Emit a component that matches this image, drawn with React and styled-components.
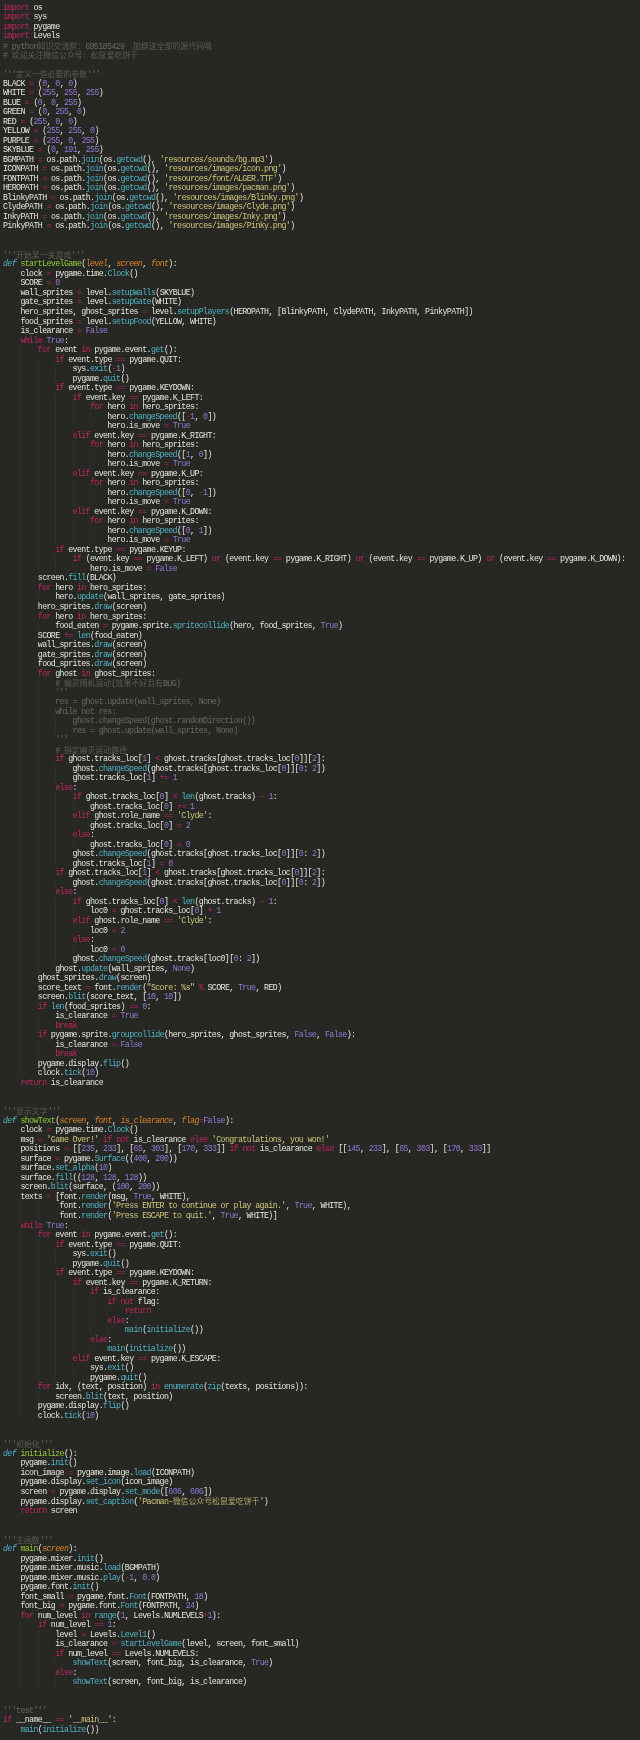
import React from "react";
import styled, { createGlobalStyle } from "styled-components";

const SOURCE = `import os
import sys
import pygame
import Levels
# python知识交流群：695185429  加群送全部的源代码哦
# 欢迎关注微信公众号：松鼠爱吃饼干

'''定义一些必要的参数'''
BLACK = (0, 0, 0)
WHITE = (255, 255, 255)
BLUE = (0, 0, 255)
GREEN = (0, 255, 0)
RED = (255, 0, 0)
YELLOW = (255, 255, 0)
PURPLE = (255, 0, 255)
SKYBLUE = (0, 191, 255)
BGMPATH = os.path.join(os.getcwd(), 'resources/sounds/bg.mp3')
ICONPATH = os.path.join(os.getcwd(), 'resources/images/icon.png')
FONTPATH = os.path.join(os.getcwd(), 'resources/font/ALGER.TTF')
HEROPATH = os.path.join(os.getcwd(), 'resources/images/pacman.png')
BlinkyPATH = os.path.join(os.getcwd(), 'resources/images/Blinky.png')
ClydePATH = os.path.join(os.getcwd(), 'resources/images/Clyde.png')
InkyPATH = os.path.join(os.getcwd(), 'resources/images/Inky.png')
PinkyPATH = os.path.join(os.getcwd(), 'resources/images/Pinky.png')


'''开始某一关游戏'''
def startLevelGame(level, screen, font):
    clock = pygame.time.Clock()
    SCORE = 0
    wall_sprites = level.setupWalls(SKYBLUE)
    gate_sprites = level.setupGate(WHITE)
    hero_sprites, ghost_sprites = level.setupPlayers(HEROPATH, [BlinkyPATH, ClydePATH, InkyPATH, PinkyPATH])
    food_sprites = level.setupFood(YELLOW, WHITE)
    is_clearance = False
    while True:
        for event in pygame.event.get():
            if event.type == pygame.QUIT:
                sys.exit(-1)
                pygame.quit()
            if event.type == pygame.KEYDOWN:
                if event.key == pygame.K_LEFT:
                    for hero in hero_sprites:
                        hero.changeSpeed([-1, 0])
                        hero.is_move = True
                elif event.key == pygame.K_RIGHT:
                    for hero in hero_sprites:
                        hero.changeSpeed([1, 0])
                        hero.is_move = True
                elif event.key == pygame.K_UP:
                    for hero in hero_sprites:
                        hero.changeSpeed([0, -1])
                        hero.is_move = True
                elif event.key == pygame.K_DOWN:
                    for hero in hero_sprites:
                        hero.changeSpeed([0, 1])
                        hero.is_move = True
            if event.type == pygame.KEYUP:
                if (event.key == pygame.K_LEFT) or (event.key == pygame.K_RIGHT) or (event.key == pygame.K_UP) or (event.key == pygame.K_DOWN):
                    hero.is_move = False
        screen.fill(BLACK)
        for hero in hero_sprites:
            hero.update(wall_sprites, gate_sprites)
        hero_sprites.draw(screen)
        for hero in hero_sprites:
            food_eaten = pygame.sprite.spritecollide(hero, food_sprites, True)
        SCORE += len(food_eaten)
        wall_sprites.draw(screen)
        gate_sprites.draw(screen)
        food_sprites.draw(screen)
        for ghost in ghost_sprites:
            # 幽灵随机运动(效果不好且有BUG)
            '''
            res = ghost.update(wall_sprites, None)
            while not res:
                ghost.changeSpeed(ghost.randomDirection())
                res = ghost.update(wall_sprites, None)
            '''
            # 指定幽灵运动路径
            if ghost.tracks_loc[1] < ghost.tracks[ghost.tracks_loc[0]][2]:
                ghost.changeSpeed(ghost.tracks[ghost.tracks_loc[0]][0: 2])
                ghost.tracks_loc[1] += 1
            else:
                if ghost.tracks_loc[0] < len(ghost.tracks) - 1:
                    ghost.tracks_loc[0] += 1
                elif ghost.role_name == 'Clyde':
                    ghost.tracks_loc[0] = 2
                else:
                    ghost.tracks_loc[0] = 0
                ghost.changeSpeed(ghost.tracks[ghost.tracks_loc[0]][0: 2])
                ghost.tracks_loc[1] = 0
            if ghost.tracks_loc[1] < ghost.tracks[ghost.tracks_loc[0]][2]:
                ghost.changeSpeed(ghost.tracks[ghost.tracks_loc[0]][0: 2])
            else:
                if ghost.tracks_loc[0] < len(ghost.tracks) - 1:
                    loc0 = ghost.tracks_loc[0] + 1
                elif ghost.role_name == 'Clyde':
                    loc0 = 2
                else:
                    loc0 = 0
                ghost.changeSpeed(ghost.tracks[loc0][0: 2])
            ghost.update(wall_sprites, None)
        ghost_sprites.draw(screen)
        score_text = font.render("Score: %s" % SCORE, True, RED)
        screen.blit(score_text, [10, 10])
        if len(food_sprites) == 0:
            is_clearance = True
            break
        if pygame.sprite.groupcollide(hero_sprites, ghost_sprites, False, False):
            is_clearance = False
            break
        pygame.display.flip()
        clock.tick(10)
    return is_clearance


'''显示文字'''
def showText(screen, font, is_clearance, flag=False):
    clock = pygame.time.Clock()
    msg = 'Game Over!' if not is_clearance else 'Congratulations, you won!'
    positions = [[235, 233], [65, 303], [170, 333]] if not is_clearance else [[145, 233], [65, 303], [170, 333]]
    surface = pygame.Surface((400, 200))
    surface.set_alpha(10)
    surface.fill((128, 128, 128))
    screen.blit(surface, (100, 200))
    texts = [font.render(msg, True, WHITE),
             font.render('Press ENTER to continue or play again.', True, WHITE),
             font.render('Press ESCAPE to quit.', True, WHITE)]
    while True:
        for event in pygame.event.get():
            if event.type == pygame.QUIT:
                sys.exit()
                pygame.quit()
            if event.type == pygame.KEYDOWN:
                if event.key == pygame.K_RETURN:
                    if is_clearance:
                        if not flag:
                            return
                        else:
                            main(initialize())
                    else:
                        main(initialize())
                elif event.key == pygame.K_ESCAPE:
                    sys.exit()
                    pygame.quit()
        for idx, (text, position) in enumerate(zip(texts, positions)):
            screen.blit(text, position)
        pygame.display.flip()
        clock.tick(10)


'''初始化'''
def initialize():
    pygame.init()
    icon_image = pygame.image.load(ICONPATH)
    pygame.display.set_icon(icon_image)
    screen = pygame.display.set_mode([606, 606])
    pygame.display.set_caption('Pacman-微信公众号松鼠爱吃饼干')
    return screen


'''主函数'''
def main(screen):
    pygame.mixer.init()
    pygame.mixer.music.load(BGMPATH)
    pygame.mixer.music.play(-1, 0.0)
    pygame.font.init()
    font_small = pygame.font.Font(FONTPATH, 18)
    font_big = pygame.font.Font(FONTPATH, 24)
    for num_level in range(1, Levels.NUMLEVELS+1):
        if num_level == 1:
            level = Levels.Level1()
            is_clearance = startLevelGame(level, screen, font_small)
            if num_level == Levels.NUMLEVELS:
                showText(screen, font_big, is_clearance, True)
            else:
                showText(screen, font_big, is_clearance)


'''test'''
if __name__ == '__main__':
    main(initialize())`;

const KEYWORDS = new Set(["import", "if", "elif", "else", "for", "in", "while", "return", "break", "not", "or"]);
const CONSTANTS = new Set(["True", "False", "None"]);
const TOKEN = /(#.*$)|('[^']*'|"[^"]*")|(\d+(?:\.\d+)?)|([A-Za-z_]\w*)|(\s+)|([-+=<%]+)|(.)/g;

function tokenize(text) {
  const isDef = text.startsWith("def ");
  const out = [];
  let parenOpen = false;
  let match;
  TOKEN.lastIndex = 0;
  while ((match = TOKEN.exec(text))) {
    const [raw, comment, str, num, word, space, op] = match;
    let kind = "plain";
    if (comment) kind = "comment";
    else if (str) kind = "string";
    else if (num) kind = "number";
    else if (op) kind = "keyword";
    else if (word) {
      const next = text[TOKEN.lastIndex];
      if (word === "def") kind = "storage";
      else if (CONSTANTS.has(word)) kind = "constant";
      else if (KEYWORDS.has(word)) kind = "keyword";
      else if (isDef && !parenOpen) kind = "title";
      else if (isDef) kind = "param";
      else if (next === "(") kind = "call";
    } else if (!space && raw === "(" && isDef) parenOpen = true;
    out.push({ raw, kind });
  }
  return out;
}

function parse(source) {
  let inDoc = false;
  return source.split("\n").map((line) => {
    const indentLen = line.match(/^ */)[0].length;
    const body = line.slice(indentLen);
    const marks = (body.match(/'''/g) || []).length;
    const doc = inDoc || marks > 0;
    if (marks % 2 === 1) inDoc = !inDoc;
    const tokens = doc ? [{ raw: body, kind: "comment" }] : tokenize(body);
    return { indent: Math.floor(indentLen / 4), extra: indentLen % 4, tokens };
  });
}

const COLORS = {
  plain: "#e6e6de",
  comment: "#6a685d",
  string: "#cfc67c",
  number: "#927ad6",
  constant: "#927ad6",
  keyword: "#c2255f",
  storage: "#52afc4",
  call: "#4fb2c6",
  title: "#93c93a",
  param: "#d9842a",
};

const GlobalStyle = createGlobalStyle`
  html, body {
    margin: 0;
    padding: 0;
    background: #272823;
  }
`;

const Editor = styled.main`
  box-sizing: border-box;
  width: 640px;
  height: 1740px;
  overflow: hidden;
  padding: 2.5px 0 0 3px;
  background: #272823;
  font-family: "Liberation Mono", "Noto Sans CJK SC", monospace;
  font-size: 8.3px;
  letter-spacing: -0.63px;
  filter: blur(0.3px);
`;

const Line = styled.div`
  display: flex;
  height: 9.52px;
  line-height: 9.52px;
  white-space: pre;
`;

const Guide = styled.span`
  flex: none;
  width: 17.4px;
  height: 100%;
  box-sizing: border-box;
  border-left: 1px solid ${(p) => (p.$first ? "transparent" : "#2e2f2a")};
`;

const Hang = styled.span`
  flex: none;
  width: ${(p) => p.$cols * 4.35}px;
`;

const Code = styled.code`
  font: inherit;
`;

const Token = styled.span`
  color: ${(p) => COLORS[p.$kind]};
  font-style: ${(p) => (p.$kind === "storage" || p.$kind === "param" ? "italic" : "normal")};
`;

const Cjk = styled.span`
  font-family: "Noto Sans CJK SC", sans-serif;
  font-size: 7.9px;
  letter-spacing: 0;
  opacity: 0.8;
`;

function TokenText({ raw, kind }) {
  const parts = raw.split(/([\u3000-\u9fff\uff00-\uffef]+)/);
  return (
    <Token $kind={kind}>
      {parts.map((part, i) => (i % 2 ? <Cjk key={i}>{part}</Cjk> : part))}
    </Token>
  );
}

export default function App() {
  const lines = parse(SOURCE);
  return (
    <>
      <GlobalStyle />
      <Editor>
        {lines.map((line, i) => (
          <Line key={i}>
            {Array.from({ length: line.indent }, (_, g) => (
              <Guide key={g} $first={g === 0} />
            ))}
            {line.extra > 0 && <Hang $cols={line.extra} />}
            <Code>
              {line.tokens.map((t, k) => (
                <TokenText key={k} raw={t.raw} kind={t.kind} />
              ))}
            </Code>
          </Line>
        ))}
      </Editor>
    </>
  );
}
